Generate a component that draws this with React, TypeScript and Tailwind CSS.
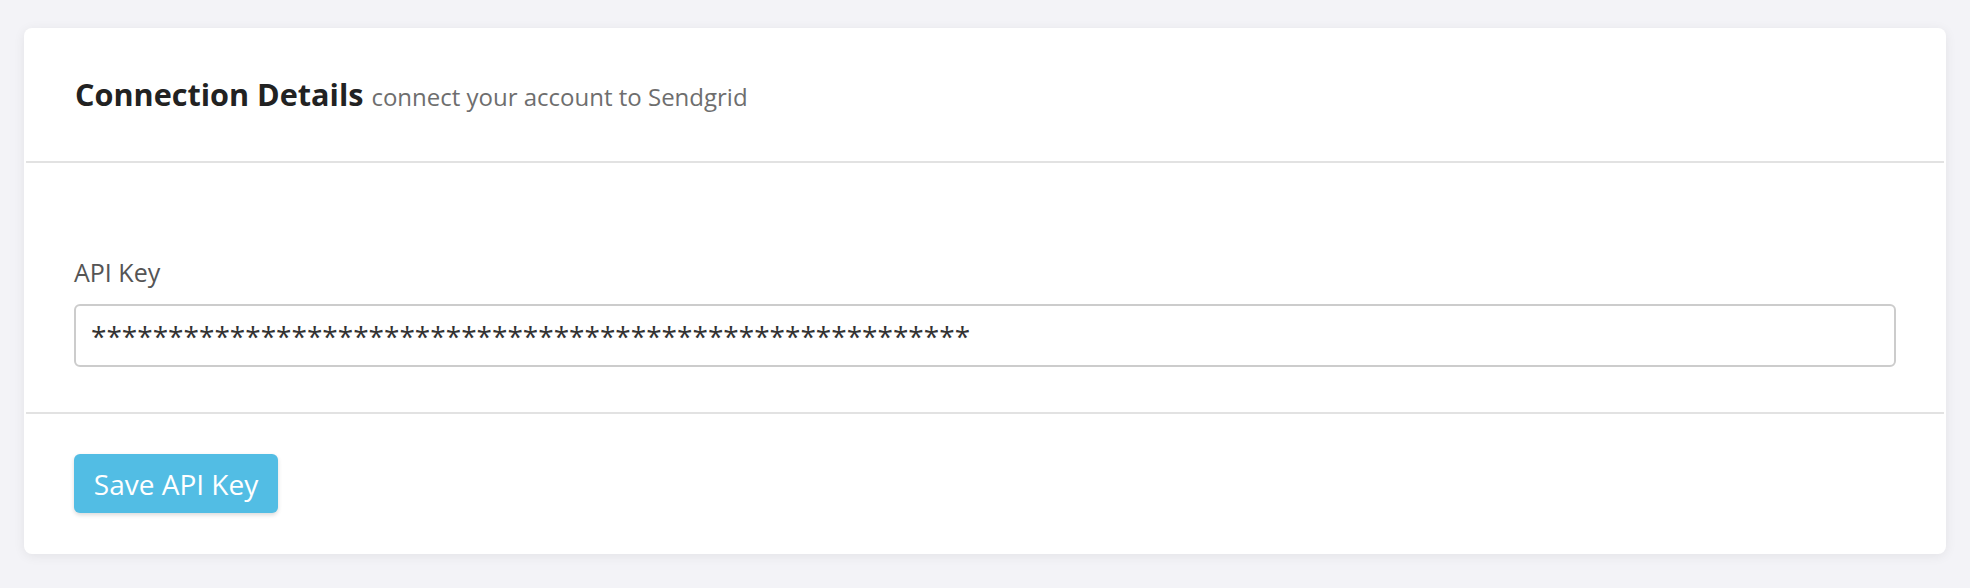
import { useState } from 'react';

export default function App() {
  const [apiKey, setApiKey] = useState('*'.repeat(57));

  return (
    <div
      className="min-h-screen w-full bg-[#f3f3f7] px-6 pt-7"
      style={{ fontFamily: '"Open Sans", "Liberation Sans", sans-serif' }}
    >
      <div className="rounded-lg bg-white shadow-[0_2px_12px_rgba(0,0,0,0.07)]">
        <div className="flex h-[133px] items-center px-[51px]">
          <h3 className="text-[30.6px] font-bold text-[#222]">
            Connection Details{' '}
            <small className="text-[24px] font-normal text-[#6e6e6e]">connect your account to Sendgrid</small>
          </h3>
        </div>
        <div className="mx-[2px] h-[2px] bg-[#e2e2e2]" />
        <div className="px-[50px] pt-[92px] pb-[45px]">
          <label className="block text-[25px] leading-[34px] text-[#555]">API Key</label>
          <input
            type="text"
            value={apiKey}
            onChange={(e) => setApiKey(e.target.value)}
            className="mt-[15px] h-[63px] w-full rounded-md border-2 border-[#cccccc] px-[15px] text-[28px] text-[#333] outline-none"
          />
        </div>
        <div className="mx-[2px] h-[2px] bg-[#e2e2e2]" />
        <div className="px-[50px] pt-[40px] pb-[41px]">
          <button className="h-[59px] w-[204px] rounded-md bg-[#52bde4] text-[28px] text-white shadow-[0_2px_4px_rgba(0,0,0,0.15)]">
            Save API Key
          </button>
        </div>
      </div>
    </div>
  );
}
